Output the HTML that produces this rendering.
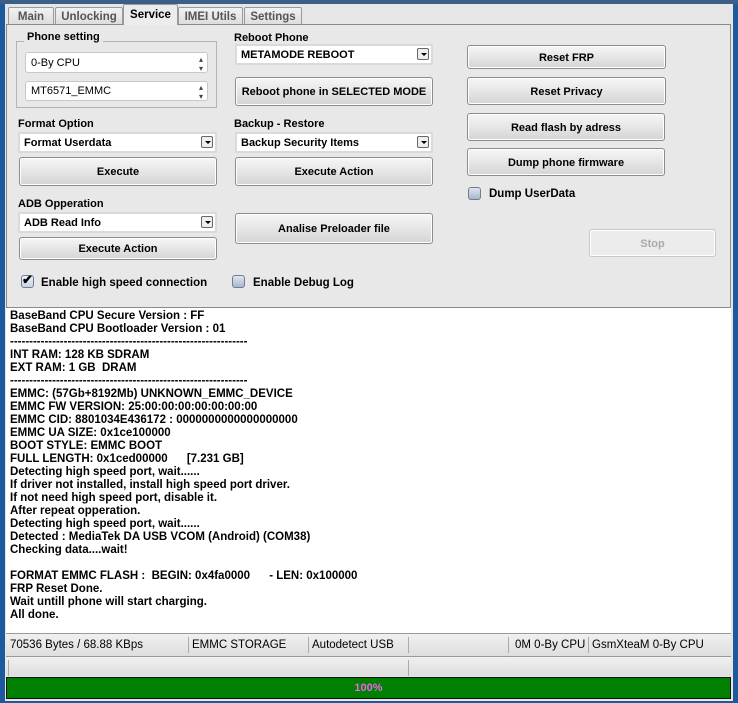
<!DOCTYPE html>
<html><head><meta charset="utf-8"><style>
*{box-sizing:border-box;margin:0;padding:0}
body{width:738px;height:703px;overflow:hidden;background:#1c5a9c;font-family:"Liberation Sans",Tahoma,sans-serif;font-size:11px;font-weight:bold;color:#000;position:relative}
.a{position:absolute}
.frame{left:5px;top:4px;width:728px;height:697px;background:#e6e6e6}
.tab{position:absolute;top:7px;height:18px;border:1px solid #9a9a9a;border-bottom:none;background:linear-gradient(#f2f2f2,#dcdcdc);color:#555;font-size:11.5px;text-align:center;line-height:18px;border-radius:2px 2px 0 0}
.tab.sel{top:4px;height:21px;background:#ececec;color:#000;z-index:2;line-height:20px}
.pane{left:6px;top:24px;width:725px;height:284px;background:#e8e8e8;border:1px solid #8a8a8a}
.btn{position:absolute;border:1px solid #8c8c8c;border-radius:3px;background:linear-gradient(#f6f6f6 0%,#e6e6e6 50%,#d4d4d4 100%);text-align:center;font-size:11px;box-shadow:inset 0 0 0 1px #fff;padding-top:2px}
.combo{position:absolute;background:#fff;border:2px solid #dadada;font-size:11px;padding-left:4px;padding-top:1px}
.dd{position:absolute;right:2px;top:2px;width:12px;height:12px;border:1px solid #666;border-radius:2px;background:#eee}
.dd:after{content:"";position:absolute;left:3px;top:4px;border:3px solid transparent;border-top:3px solid #000;border-bottom:none}
.spin{position:absolute;background:#fff;border:1px solid #c8c8c8;border-radius:3px;font-weight:normal;padding-left:5px;font-size:11px;padding-top:1px}
.lbl{position:absolute;font-size:11px;margin-top:2px}
.cb{position:absolute;width:13px;height:13px;border:1px solid #6d7d94;border-radius:3px;background:linear-gradient(#dfe6f0,#aab6c8)}
.log{left:6px;top:308px;width:725px;height:325px;background:#fff;font-size:11.5px}
.log div{height:13px;line-height:13px;white-space:pre;padding-left:4px}
.sb{position:absolute;left:6px;width:725px;background:linear-gradient(#f0f0f0,#dedede);border-top:1px solid #9a9a9a;font-weight:normal;font-size:11.5px}
.sep{position:absolute;top:3px;width:1px;height:16px;background:#aaa}
</style></head><body>
<div class="a" style="left:0;top:0;width:738px;height:4px;background:#3d5f85"></div>
<div class="a frame"></div>
<div class="tab" style="left:8px;width:46px">Main</div>
<div class="tab" style="left:55px;width:68px">Unlocking</div>
<div class="tab sel" style="left:123px;width:55px">Service</div>
<div class="tab" style="left:178px;width:65px">IMEI Utils</div>
<div class="tab" style="left:244px;width:58px">Settings</div>
<div class="a pane"></div>

<div class="a" style="left:16px;top:41px;width:201px;height:67px;border:1px solid #b4b4b4"></div>
<div class="lbl" style="left:24px;top:29px;background:#e8e8e8;padding:0 3px">Phone setting</div>
<div class="spin" style="left:25px;top:52px;width:183px;height:21px;line-height:18px">0-By CPU<span style="position:absolute;right:4px;font-size:8px;color:#444;line-height:9px;top:2px">▴<br>▾</span></div>
<div class="spin" style="left:25px;top:81px;width:183px;height:20px;line-height:17px">MT6571_EMMC<span style="position:absolute;right:4px;top:1px;font-size:8px;color:#444;line-height:9px">▴<br>▾</span></div>

<div class="lbl" style="left:234px;top:30px">Reboot Phone</div>
<div class="combo" style="left:235px;top:44px;width:198px;height:21px;line-height:16px">METAMODE REBOOT<div class="dd"></div></div>
<div class="btn" style="left:235px;top:77px;width:198px;height:29px;line-height:25px">Reboot phone in SELECTED MODE</div>

<div class="lbl" style="left:18px;top:116px">Format Option</div>
<div class="combo" style="left:18px;top:132px;width:199px;height:21px;line-height:16px">Format Userdata<div class="dd"></div></div>
<div class="btn" style="left:19px;top:157px;width:198px;height:29px;line-height:25px">Execute</div>

<div class="lbl" style="left:234px;top:116px">Backup - Restore</div>
<div class="combo" style="left:235px;top:132px;width:198px;height:21px;line-height:16px">Backup Security Items<div class="dd"></div></div>
<div class="btn" style="left:235px;top:157px;width:198px;height:29px;line-height:25px">Execute Action</div>

<div class="lbl" style="left:18px;top:196px">ADB Opperation</div>
<div class="combo" style="left:18px;top:212px;width:199px;height:21px;line-height:16px">ADB Read Info<div class="dd"></div></div>
<div class="btn" style="left:19px;top:237px;width:198px;height:23px;line-height:19px">Execute Action</div>
<div class="btn" style="left:235px;top:213px;width:198px;height:31px;line-height:27px">Analise Preloader file</div>

<div class="cb" style="left:21px;top:275px;background:linear-gradient(#eef2f7,#c9d2de)"><span style="position:absolute;left:0;top:-4px;font-size:13px">✔</span></div>
<div class="lbl" style="left:41px;top:275px;font-size:11.5px">Enable high speed connection</div>
<div class="cb" style="left:232px;top:275px"></div>
<div class="lbl" style="left:253px;top:275px;font-size:11.5px">Enable Debug Log</div>

<div class="btn" style="left:467px;top:45px;width:199px;height:24px;line-height:20px">Reset FRP</div>
<div class="btn" style="left:467px;top:77px;width:199px;height:28px;line-height:24px">Reset Privacy</div>
<div class="btn" style="left:467px;top:113px;width:198px;height:28px;line-height:24px">Read flash by adress</div>
<div class="btn" style="left:467px;top:148px;width:198px;height:28px;line-height:24px">Dump phone firmware</div>
<div class="cb" style="left:468px;top:187px"></div>
<div class="lbl" style="left:489px;top:186px;font-size:11.5px">Dump UserData</div>
<div class="btn" style="left:589px;top:229px;width:127px;height:28px;line-height:24px;color:#aaa;border-color:#c8c8c8;background:#ececec">Stop</div>

<div class="a log" style="padding-top:2px">
<div>BaseBand CPU Secure Version : FF</div>
<div>BaseBand CPU Bootloader Version : 01</div>
<div>--------------------------------------------------------------</div>
<div>INT RAM: 128 KB SDRAM</div>
<div>EXT RAM: 1 GB  DRAM</div>
<div>--------------------------------------------------------------</div>
<div>EMMC: (57Gb+8192Mb) UNKNOWN_EMMC_DEVICE</div>
<div>EMMC FW VERSION: 25:00:00:00:00:00:00:00</div>
<div>EMMC CID: 8801034E436172 : 0000000000000000000</div>
<div>EMMC UA SIZE: 0x1ce100000</div>
<div>BOOT STYLE: EMMC BOOT</div>
<div>FULL LENGTH: 0x1ced00000      [7.231 GB]</div>
<div>Detecting high speed port, wait......</div>
<div>If driver not installed, install high speed port driver.</div>
<div>If not need high speed port, disable it.</div>
<div>After repeat opperation.</div>
<div>Detecting high speed port, wait......</div>
<div>Detected : MediaTek DA USB VCOM (Android) (COM38)</div>
<div>Checking data....wait!</div>
<div> </div>
<div>FORMAT EMMC FLASH :  BEGIN: 0x4fa0000      - LEN: 0x100000</div>
<div>FRP Reset Done.</div>
<div>Wait untill phone will start charging.</div>
<div>All done.</div>
</div>

<div class="sb" style="top:633px;height:23px;line-height:23px">
<span class="a" style="left:4px">70536 Bytes / 68.88 KBps</span>
<div class="sep" style="left:182px"></div><span class="a" style="left:186px">EMMC STORAGE</span>
<div class="sep" style="left:302px"></div><span class="a" style="left:306px">Autodetect USB</span>
<div class="sep" style="left:402px"></div>
<div class="sep" style="left:502px"></div><span class="a" style="left:509px">0M 0-By CPU</span>
<div class="sep" style="left:582px"></div><span class="a" style="left:586px">GsmXteaM 0-By CPU</span>
</div>
<div class="sb" style="top:656px;height:20px"><div class="sep" style="left:2px"></div><div class="sep" style="left:402px"></div></div>
<div class="a" style="left:6px;top:677px;width:725px;height:22px;background:#008000;border:1px solid #111;text-align:center;line-height:21px;color:#f060f0;font-weight:bold">100%</div>
</body></html>
